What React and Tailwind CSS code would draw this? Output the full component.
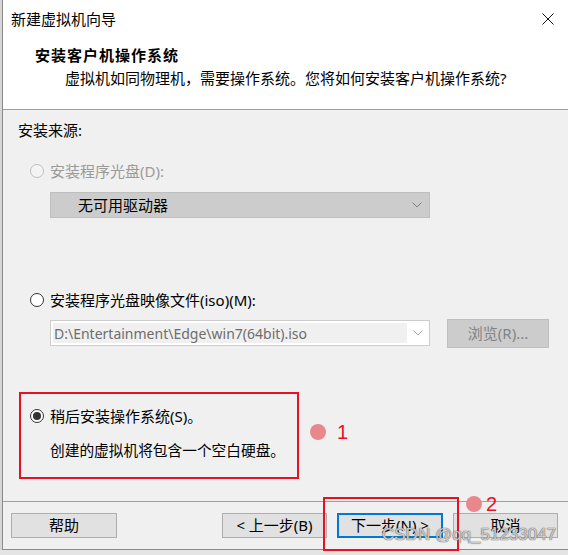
import React from 'react';

const font = { fontFamily: '"Noto Sans", "Noto Sans CJK SC", sans-serif' };

const Radio = ({ checked, disabled }) => (
  <span
    className={`w-[14px] h-[14px] rounded-full border flex items-center justify-center shrink-0 ${
      disabled ? 'border-[#bcbcbc] bg-[#f4f4f4]' : 'border-[#333333] bg-white'
    }`}
  >
    {checked && <span className="w-[8px] h-[8px] rounded-full bg-[#333333]" />}
  </span>
);

const Chevron = ({ color }) => (
  <svg width="10" height="6" viewBox="0 0 10 6" className="shrink-0">
    <path d="M0.5 0.5 L5 5 L9.5 0.5" fill="none" stroke={color} strokeWidth="1" />
  </svg>
);

const Button = ({ children, primary, width = 'w-[105px]' }) => (
  <div
    className={`${width} h-[25px] flex items-center justify-center bg-[#e1e1e1] text-[15px] text-black ${
      primary ? 'border-2 border-[#0078d7]' : 'border border-[#adadad]'
    }`}
  >
    {children}
  </div>
);

export default function App() {
  return (
    <div className="relative w-[568px] h-[555px] overflow-hidden bg-[#d6d6d6]" style={font}>
      <div className="ml-[2px] h-[550px] flex flex-col border-l border-b border-[#8a8a8a] bg-[#f0f0f0]">
        {/* header */}
        <div className="h-[110px] bg-white border-b border-[#a0a0a0] flex flex-col">
          <div className="h-[38px] flex items-center justify-between pl-[8px] pr-[14px]">
            <span className="text-[15px] text-black">新建虚拟机向导</span>
            <svg width="12" height="12" viewBox="0 0 12 12">
              <path d="M0.5 0.5 L11.5 11.5 M11.5 0.5 L0.5 11.5" stroke="#111" strokeWidth="1" />
            </svg>
          </div>
          <div className="mt-[7px] h-[20px] leading-[20px] pl-[32px] text-[15px] font-bold tracking-[1px] text-black">
            安装客户机操作系统
          </div>
          <div className="mt-[3px] h-[20px] leading-[20px] pl-[62px] text-[15px] text-black">
            虚拟机如同物理机，需要操作系统。您将如何安装客户机操作系统?
          </div>
        </div>

        {/* body */}
        <div className="flex-1 flex flex-col pl-[15px] text-[15px]">
          <div className="mt-[10px] h-[20px] leading-[20px] text-black">安装来源:</div>

          <div className="mt-[21px] h-[20px] flex items-center pl-[12px] gap-[6px] text-[#9a9a9a]">
            <Radio disabled />
            <span>安装程序光盘(D):</span>
          </div>
          <div className="mt-[11px] ml-[32px] w-[380px] h-[26px] flex items-center justify-between bg-[#cccccc] border border-[#bfbfbf] pl-[27px] pr-[7px] text-black">
            <span>无可用驱动器</span>
            <Chevron color="#808080" />
          </div>

          <div className="mt-[72px] h-[20px] flex items-center pl-[12px] gap-[6px] text-black">
            <Radio />
            <span>安装程序光盘映像文件(iso)(M):</span>
          </div>
          <div className="mt-[9px] flex items-start">
            <div className="mt-[1px] ml-[32px] w-[380px] h-[26px] flex items-center bg-white border border-[#cccccc] p-[2px] pr-[6px]">
              <div className="h-full w-[354px] bg-[#f0f0f0] flex items-center pl-[1px] text-[14px] text-[#6d6d6d]">
                D:\Entertainment\Edge\win7(64bit).iso
              </div>
              <div className="flex-1 flex justify-end">
                <Chevron color="#a8a8a8" />
              </div>
            </div>
            <div className="ml-[17px] w-[102px] h-[29px] flex items-center justify-center bg-[#cccccc] border border-[#bfbfbf] text-[#838383]">
              浏览(R)...
            </div>
          </div>

          <div className="mt-[58px] h-[20px] flex items-center pl-[12px] gap-[6px] text-black">
            <Radio checked />
            <span>稍后安装操作系统(S)。</span>
          </div>
          <div className="mt-[14px] h-[20px] leading-[20px] pl-[32px] text-[14.7px] text-black">
            创建的虚拟机将包含一个空白硬盘。
          </div>
        </div>

        {/* footer */}
        <div className="h-[48px] border-t border-[#a0a0a0] flex items-start justify-between pt-[11px] pl-[8px] pr-[10px]">
          <Button width="w-[106px]">帮助</Button>
          <div className="flex gap-[10px]">
            <Button>&lt; 上一步(B)</Button>
            <Button primary width="w-[106px]">下一步(N) &gt;</Button>
            <Button>取消</Button>
          </div>
        </div>
      </div>
      <div className="h-[5px] bg-[#e4e4e4]" />

      {/* annotations */}
      <div className="absolute left-[19px] top-[392px] w-[280px] h-[87px] border-2 border-[#e81123]" />
      <div className="absolute left-[310px] top-[424px] w-[16px] h-[16px] rounded-full bg-[#e8888c]" />
      <div className="absolute left-[337px] top-[419px] text-[20px] leading-[26px] text-[#e81123]" style={{ fontFamily: '"Liberation Sans", Arial, sans-serif' }}>1</div>
      <div className="absolute left-[323px] top-[497px] w-[136px] h-[54px] border-2 border-[#e81123]" />
      <div className="absolute left-[466px] top-[496px] w-[16px] h-[16px] rounded-full bg-[#e8888c]" />
      <div className="absolute left-[486px] top-[491px] text-[20px] leading-[26px] text-[#e81123]" style={{ fontFamily: '"Liberation Sans", Arial, sans-serif' }}>2</div>
      <div
        className="absolute left-[382px] top-[524px] text-[17px] leading-[22px] text-white/70 [text-shadow:0_0_1px_#555,0_0_1px_#555]"
        style={{ fontFamily: '"Liberation Sans", Arial, sans-serif' }}
      >
        CSDN @qq_51233047
      </div>
    </div>
  );
}
